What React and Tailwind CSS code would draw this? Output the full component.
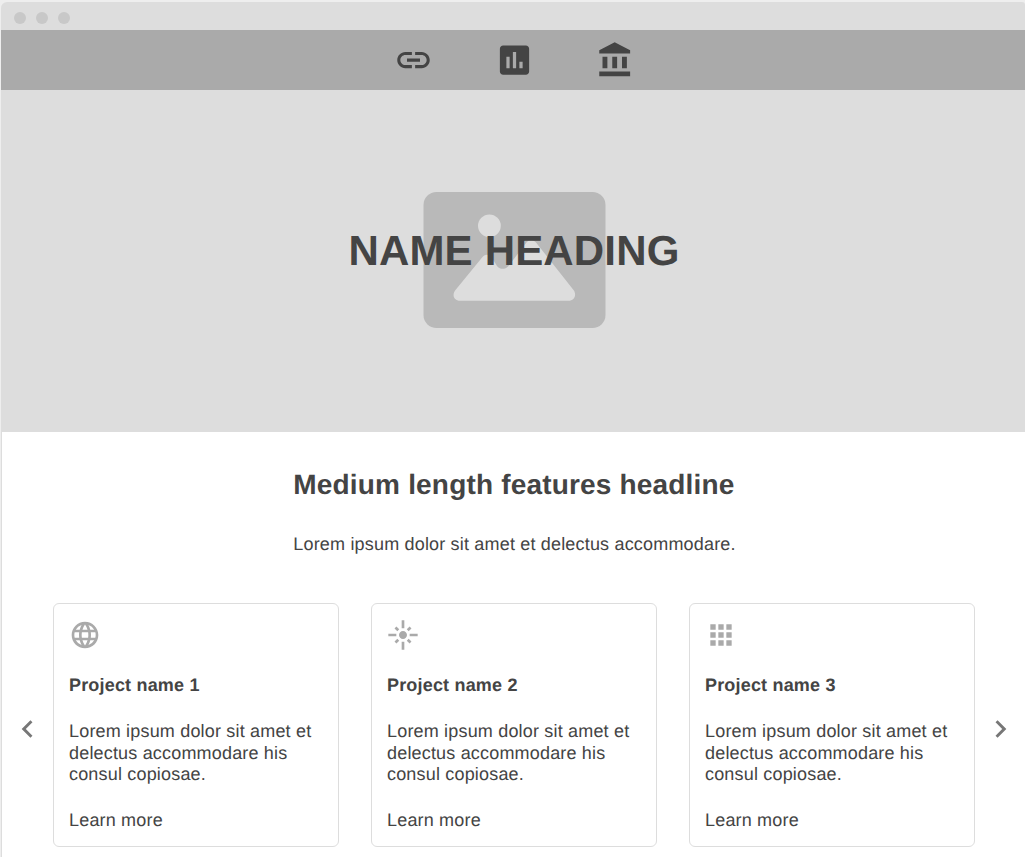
import React from "react";
import {
  MdLink, MdAssessment, MdLanguage, MdFlare, MdApps, MdChevronLeft, MdChevronRight,
} from "react-icons/md";

const projects = [
  { name: "Project name 1", Icon: MdLanguage },
  { name: "Project name 2", Icon: MdFlare },
  { name: "Project name 3", Icon: MdApps },
];

function BankIcon({ className }) {
  return (
    <svg className={className} viewBox="0 0 24 24" fill="currentColor">
      <path d="M4 10v7h3v-7H4zm6 0v7h3v-7h-3zM2 22h19v-3H2v3zm14-12v7h3v-7h-3zm-4.500-9L2 6v2h19V6l-9.500-5z" />
    </svg>
  );
}

function Placeholder() {
  return (
    <svg className="col-start-1 row-start-1 mb-[2px] ml-[2px]" width="184" height="138" viewBox="0 0 184 138">
      <rect x="1.5" y="1" width="182" height="136" rx="13" fill="#b9b9b9" />
      <circle cx="67.4" cy="34.8" r="11.4" fill="#dddddd" />
      <path
        d="M38 109.800 H146.500 C152.500 109.800 155 103.500 151.500 99 L114 51.500 C111 48 107 48 104.500 51.500 L86.500 75 C83 79 77.500 78.500 75 75 L70 67 C67.500 63 63.500 62.500 60.500 66 L33.500 99 C29.500 104 32 109.800 38 109.800 Z"
        fill="#dddddd"
      />
    </svg>
  );
}

function ProjectCard({ name, Icon }) {
  return (
    <article className="flex h-[244px] w-[286px] flex-col rounded-[6px] border border-[#dddddd] px-[15px] pt-[15px] text-[18px] leading-[21.6px]">
      <Icon className="size-8 text-[#aaaaaa]" />
      <h3 className="mt-[24px] font-bold">{name}</h3>
      <p className="mt-[24.4px]">
        Lorem ipsum dolor sit amet et
        <br />
        delectus accommodare his
        <br />
        consul copiosae.
      </p>
      <a className="mt-[24px]">Learn more</a>
    </article>
  );
}

export default function App() {
  return (
    <div className="h-[857px] w-[1025px] overflow-hidden bg-[#eeeeee] pt-[2px] pl-px font-['Liberation_Sans',Arial,sans-serif] tracking-[0.18px] text-[#444444] [text-rendering:geometricPrecision]">
      <div className="flex h-[855px] flex-col overflow-hidden rounded-tl-[6px] rounded-tr-[3px] bg-[#dddddd]">
        <div className="flex h-7 shrink-0 items-center gap-[10px] pt-[4px] pl-[13px]">
          <span className="size-3 rounded-full bg-[#c8c8c8]" />
          <span className="size-3 rounded-full bg-[#c8c8c8]" />
          <span className="size-3 rounded-full bg-[#c8c8c8]" />
        </div>
        <nav className="flex h-[60px] shrink-0 items-center justify-center gap-[62px] bg-[#aaaaaa] pl-[3px]">
          <MdLink className="h-10 w-[39px]" />
          <MdAssessment className="h-10 w-[39px]" />
          <BankIcon className="h-10 w-[39px]" />
        </nav>
        <header className="grid h-[342px] shrink-0 place-items-center">
          <Placeholder />
          <h1 className="z-10 col-start-1 row-start-1 mb-[20px] ml-[2px] text-[42px] leading-[50px] font-bold whitespace-nowrap">
            NAME HEADING
          </h1>
        </header>
        <main className="ml-px flex grow flex-col bg-white">
          <div className="flex flex-col self-center pt-[36px] pl-[2px]">
            <h2 className="text-[28px] leading-[34px] font-bold whitespace-nowrap">Medium length features headline</h2>
            <p className="mt-[31px] text-[18px] leading-[22px] whitespace-nowrap">
              Lorem ipsum dolor sit amet et delectus accommodare.
            </p>
          </div>
          <section className="mt-[48px] flex items-center gap-2 pl-2">
            <MdChevronLeft className="mt-[8px] h-9 w-[35px] shrink-0 text-[#777777]" />
            <div className="flex gap-8">
              {projects.map((p) => (
                <ProjectCard key={p.name} {...p} />
              ))}
            </div>
            <MdChevronRight className="mt-[8px] h-9 w-[35px] shrink-0 text-[#777777]" />
          </section>
        </main>
      </div>
    </div>
  );
}
